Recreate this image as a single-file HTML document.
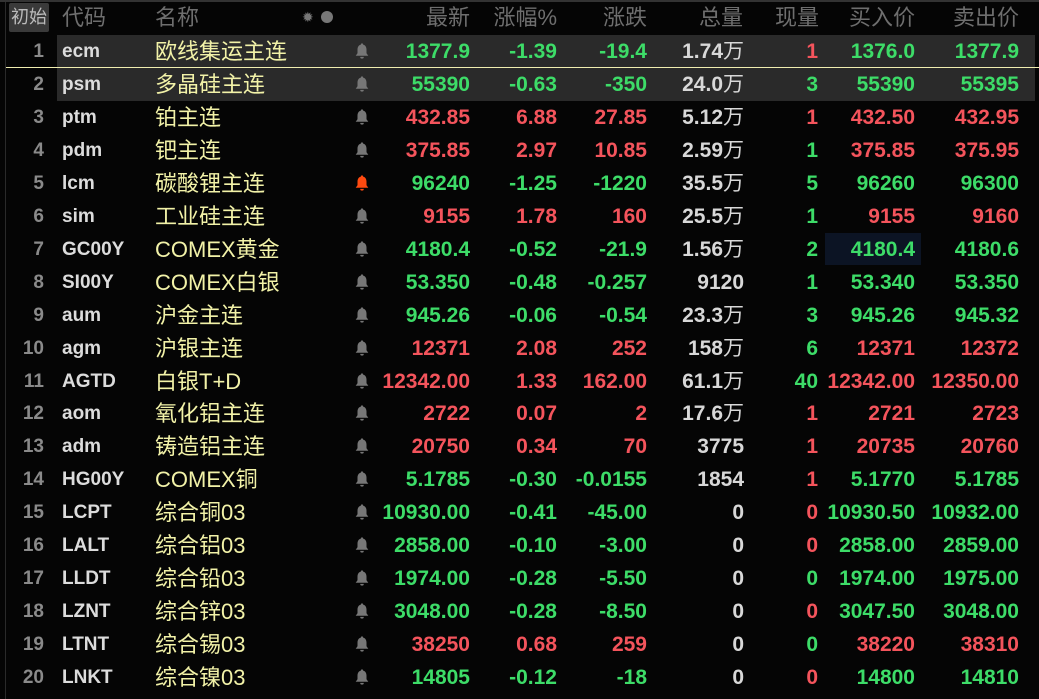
<!DOCTYPE html>
<html><head><meta charset="utf-8"><style>
*{margin:0;padding:0;box-sizing:border-box}
body{width:1039px;height:699px;background:#050505;overflow:hidden;position:relative;font-family:"Liberation Sans","Noto Sans CJK SC",sans-serif}
.top{position:absolute;left:0;top:0;width:1039px;height:2px;background:#333}
.vl{position:absolute;left:5px;top:2px;width:1px;height:697px;background:#2a2a2a}
.btn{position:absolute;left:9px;top:3px;width:40px;height:29px;background:#3a3a3a;border-radius:2px;color:#bbb;font-size:18px;line-height:29px;text-align:center}
.h{position:absolute;top:0;height:36px;line-height:36px;color:#6e6e6e;font-size:22px}
.row{position:absolute;left:0;width:1039px;height:33px;line-height:33px}
.row span{position:absolute;top:0;white-space:nowrap}
.bg{position:absolute;left:57px;top:0;width:978px;height:33px;background:#2a2a2a}
.n{right:995px;color:#8a8a8a;font-weight:bold;font-size:19px}
.c{left:62px;color:#dcdcdc;font-weight:bold;font-size:19px}
.m{left:155px;color:#f2f2a8;font-size:22px}
.row span.b{left:353px;top:7px;width:18px;height:18px;display:block;line-height:0}
.b svg{display:block}
.v{font-weight:bold;font-size:21px;text-align:right}
.g{color:#3ddc68}.r{color:#f4545c}.w{color:#d8d8d8}
.wan{font-weight:normal;font-size:21px}
</style></head><body>
<div class="top"></div><div class="vl"></div>
<div class="btn">初始</div>
<div class="h" style="left:62px">代码</div>
<div class="h" style="left:155px">名称</div>
<div style="position:absolute;left:302px;top:10px;color:#777;font-size:14px;line-height:14px">✹</div>
<div style="position:absolute;left:321px;top:11px;width:12px;height:12px;border-radius:50%;background:#777"></div>
<div class="h" style="right:569px">最新</div>
<div class="h" style="right:482px">涨幅%</div>
<div class="h" style="right:392px">涨跌</div>
<div class="h" style="right:296px">总量</div>
<div class="h" style="right:220px">现量</div>
<div class="h" style="right:124px">买入价</div>
<div class="h" style="right:20px">卖出价</div>
<div style="position:absolute;left:6px;top:67px;width:1033px;height:1px;background:#f0eeb0;z-index:2"></div>
<div style="position:absolute;left:825px;top:233px;width:96px;height:32px;background:#0c1424"></div>
<div id="rows"></div>
<script>
const D=[
["ecm","欧线集运主连","g","1377.9","-1.39","-19.4","1.74万","r","1","1376.0","1377.9"],
["psm","多晶硅主连","g","55390","-0.63","-350","24.0万","g","3","55390","55395"],
["ptm","铂主连","r","432.85","6.88","27.85","5.12万","r","1","432.50","432.95"],
["pdm","钯主连","r","375.85","2.97","10.85","2.59万","g","1","375.85","375.95"],
["lcm","碳酸锂主连","g","96240","-1.25","-1220","35.5万","g","5","96260","96300"],
["sim","工业硅主连","r","9155","1.78","160","25.5万","g","1","9155","9160"],
["GC00Y","COMEX黄金","g","4180.4","-0.52","-21.9","1.56万","g","2","4180.4","4180.6"],
["SI00Y","COMEX白银","g","53.350","-0.48","-0.257","9120","g","1","53.340","53.350"],
["aum","沪金主连","g","945.26","-0.06","-0.54","23.3万","g","3","945.26","945.32"],
["agm","沪银主连","r","12371","2.08","252","158万","g","6","12371","12372"],
["AGTD","白银T+D","r","12342.00","1.33","162.00","61.1万","g","40","12342.00","12350.00"],
["aom","氧化铝主连","r","2722","0.07","2","17.6万","r","1","2721","2723"],
["adm","铸造铝主连","r","20750","0.34","70","3775","r","1","20735","20760"],
["HG00Y","COMEX铜","g","5.1785","-0.30","-0.0155","1854","r","1","5.1770","5.1785"],
["LCPT","综合铜03","g","10930.00","-0.41","-45.00","0","r","0","10930.50","10932.00"],
["LALT","综合铝03","g","2858.00","-0.10","-3.00","0","r","0","2858.00","2859.00"],
["LLDT","综合铅03","g","1974.00","-0.28","-5.50","0","g","0","1974.00","1975.00"],
["LZNT","综合锌03","g","3048.00","-0.28","-8.50","0","r","0","3047.50","3048.00"],
["LTNT","综合锡03","r","38250","0.68","259","0","g","0","38220","38310"],
["LNKT","综合镍03","g","14805","-0.12","-18","0","r","0","14800","14810"]];
let h="";
D.forEach((d,i)=>{
 const top=35+i*32.95;
 const bell=i==4?"#ff4a10":"#777";
 let vol=d[6].endsWith("万")?d[6].slice(0,-1)+'<span class="wan" style="position:static">万</span>':d[6];
 h+=`<div class="row" style="top:${top}px">${i<2?'<div class="bg"></div>':''}
<span class="n">${i+1}</span><span class="c">${d[0]}</span><span class="m">${d[1]}</span>
<span class="b"><svg width="18" height="18" viewBox="0 0 16 16"><path d="M8 1.2c.8 0 1 .6 1 1.1 2 .5 3 2.2 3 4.5v3.2l1.6 2.2H2.4L4 10V6.8c0-2.3 1-4 3-4.5 0-.5.2-1.1 1-1.1zM6.4 13.2h3.2a1.6 1.6 0 0 1-3.2 0z" fill="${bell}"/></svg></span>
<span class="v ${d[2]}" style="right:569px">${d[3]}</span>
<span class="v ${d[2]}" style="right:482px">${d[4]}</span>
<span class="v ${d[2]}" style="right:392px">${d[5]}</span>
<span class="v w" style="right:295px">${vol}</span>
<span class="v ${d[7]}" style="right:221px">${d[8]}</span>
<span class="v ${d[2]}" style="right:124px">${d[9]}</span>
<span class="v ${d[2]}" style="right:20px">${d[10]}</span></div>`;
});
document.getElementById("rows").innerHTML=h;
</script>
</body></html>
